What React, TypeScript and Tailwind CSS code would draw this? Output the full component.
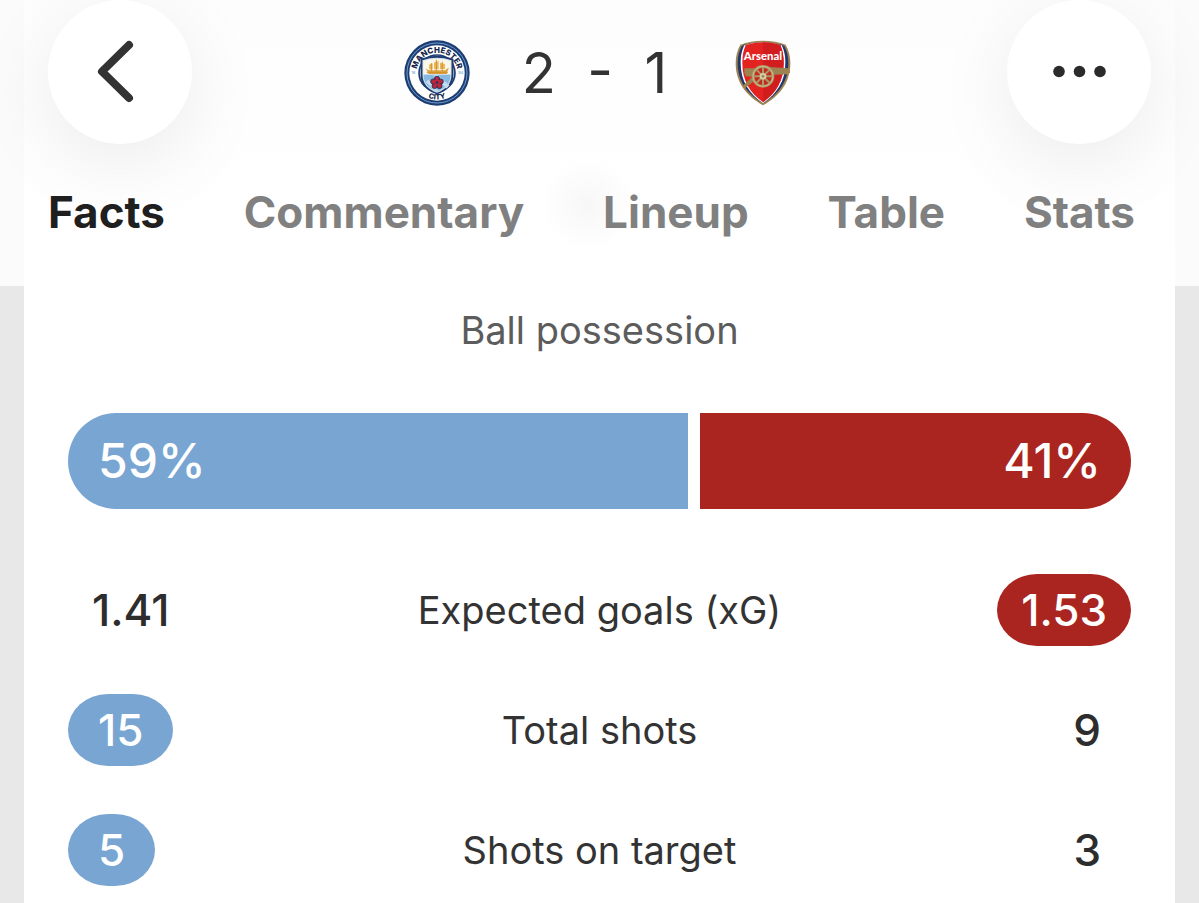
type StatRow = {
  label: string;
  home: string;
  away: string;
  leader: "home" | "away";
};

const tabs = ["Facts", "Commentary", "Lineup", "Table", "Stats"];

const possession = { home: 59, away: 41 };

const stats: StatRow[] = [
  { label: "Expected goals (xG)", home: "1.41", away: "1.53", leader: "away" },
  { label: "Total shots", home: "15", away: "9", leader: "home" },
  { label: "Shots on target", home: "5", away: "3", leader: "home" },
];

const ManCityCrest = () => (
  <svg viewBox="0 0 200 200" className="size-[66px]" role="img" aria-label="Manchester City">
    <defs>
      <path id="city-top" d="M38 100a62 62 0 0 1 124 0" />
      <path id="city-bottom" d="M20 100a80 80 0 0 0 160 0" />
    </defs>
    <circle cx="100" cy="100" r="99" fill="#1d3c72" />
    <circle cx="100" cy="100" r="91" fill="none" stroke="#6f9fce" strokeWidth="3" />
    <circle cx="100" cy="100" r="84" fill="#fff" />
    <circle cx="100" cy="100" r="57" fill="#1d3c72" />
    <circle cx="100" cy="100" r="52" fill="#fff" />
    <path d="M50 57q50-18 100 0v47c0 34-21 51-50 61-29-10-50-27-50-61z" fill="#1d3c72" />
    <path d="M56 61q44-15 88 0v43c0 30-17 46-44 56-27-10-44-26-44-56z" fill="#d9e4ec" />
    <path d="M59 64q41-13 82 0v40H59z" fill="#fbf7ea" />
    <path d="M59 105h82c-1 28-16 41-41 51-25-10-40-23-41-51z" fill="#86b9e2" />
    <path d="M88 108l12-3 38 32-9 10zM66 128l8-8 30 33-8 2z" fill="#c3dcf0" />
    <path d="M66 86l9 6h50l11-9-7 20H75z" fill="#dda13d" />
    <path d="M76 89V74l11-3v18zM91 89V68l14-4v25zM109 88V69l15 4v15z" fill="#e9b85c" />
    <path d="M98 60v38M83 70v25M116 66v28M69 99h64" stroke="#d1922d" strokeWidth="3" fill="none" />
    <g fill="#bd243b" stroke="#28365c" strokeWidth="3">
      <circle cx="100" cy="118" r="8" />
      <circle cx="111" cy="126" r="8" />
      <circle cx="107" cy="139" r="8" />
      <circle cx="93" cy="139" r="8" />
      <circle cx="89" cy="126" r="8" />
    </g>
    <circle cx="100" cy="129" r="9" fill="#bd243b" />
    <circle cx="100" cy="129" r="4" fill="#28365c" />
    <g fill="#14264b" fontFamily="Inter, sans-serif" fontWeight="800" textAnchor="middle">
      <text fontSize="24">
        <textPath href="#city-top" startOffset="50%">MANCHESTER</textPath>
      </text>
      <text fontSize="22">
        <textPath href="#city-bottom" startOffset="50%">CITY</textPath>
      </text>
    </g>
    <g fill="#8ab4da" fontFamily="Inter, sans-serif" fontWeight="600" fontSize="12" textAnchor="middle">
      <text x="28" y="104">18</text>
      <text x="172" y="104">94</text>
    </g>
  </svg>
);

const ArsenalCrest = () => (
  <svg viewBox="0 0 168 196" className="h-[66px] w-[56px]" role="img" aria-label="Arsenal">
    <path d="M84 1q37 0 68 12c9 18 14 33 14 55 0 62-36 101-82 127C38 169 2 130 2 68c0-22 5-37 14-55Q47 1 84 1z" fill="#9c8350" />
    <path d="M84 6q34 0 64 11c8 17 12 31 12 51 0 59-33 95-76 121C41 163 8 127 8 68c0-20 4-34 12-51Q50 6 84 6z" fill="#23356f" />
    <path d="M84 6q30 0 56 9c8 17 11 31 11 53 0 55-25 91-67 121-42-30-67-66-67-121 0-22 3-36 11-53Q54 6 84 6z" fill="#fff" />
    <path d="M84 6q28 0 52 8c7 17 10 32 10 54 0 54-23 89-62 118-39-29-62-64-62-118 0-22 3-37 10-54Q56 6 84 6z" fill="#e2231f" />
    <path d="M84 6q28 0 52 8c7 17 10 32 10 54 0 54-23 89-62 118z" fill="#d21d1f" />
    <text x="84" y="59" fill="#fff" fontFamily="Lato, sans-serif" fontWeight="900" fontSize="34" textAnchor="middle">
      Arsenal
    </text>
    <path d="M28 84h48l12-5 72 5v5h5v9h-6v4l-59 2-28 5-42 35-8-6 30-29-21-1v-8h-3z" fill="#9c8350" />
    <circle cx="84" cy="108" r="31" fill="#c22a22" />
    <g fill="none" stroke="#ad9763">
      <circle cx="84" cy="108" r="30" strokeWidth="8" />
      <circle cx="84" cy="108" r="30" strokeWidth="2" stroke="#d8cda6" />
      <path d="M84 80v56M56 108h56M64 88l40 40M104 88l-40 40" strokeWidth="6" />
    </g>
    <circle cx="84" cy="108" r="10" fill="#d8cda6" />
    <circle cx="84" cy="108" r="4" fill="#9c8350" />
  </svg>
);

const roundButton =
  "size-36 cursor-pointer rounded-full bg-white shadow-[0_20px_80px_rgba(0,0,0,0.08)]";

const BackButton = () => (
  <button type="button" aria-label="Back" className={roundButton}>
    <svg viewBox="0 0 144 144" fill="none" stroke="#333" strokeWidth="8" strokeLinecap="round" strokeLinejoin="round">
      <path d="M81 45L54 71.5L81 98" />
    </svg>
  </button>
);

const MoreButton = () => (
  <button type="button" aria-label="More options" className={roundButton}>
    <svg viewBox="0 0 144 144" fill="#2b2b2b">
      <circle cx="52" cy="71.5" r="5.8" />
      <circle cx="72.5" cy="71.5" r="5.8" />
      <circle cx="93" cy="71.5" r="5.8" />
    </svg>
  </button>
);

const StatValue = ({ value, highlight }: { value: string; highlight?: string }) => (
  <span
    className={`inline-flex h-[72px] items-center rounded-[40px/36px] text-[44px] font-medium ${
      value.includes(".") ? "px-6" : "px-[30px]"
    } ${highlight ? `${highlight} text-white` : "text-[#2d2d2d]"}`}
  >
    {value}
  </span>
);

const App = () => {
  return (
    <div className="flex min-h-screen flex-col bg-[#e8e8e8] font-['Inter',sans-serif]">
      <header className="bg-[#fbfbfb]">
        <div className="mx-6 h-[286px] bg-[radial-gradient(circle_at_49%_205px,#f7f7f7,transparent_45px),linear-gradient(#fdfdfd,#fefefe_30%,#fff)] px-6">
          <div className="grid grid-cols-[1fr_auto_1fr] items-center">
            <BackButton />
            <div className="flex items-center pt-0.5 pr-1">
              <ManCityCrest />
              <h1 className="pr-17 pl-13 text-[56px] whitespace-pre text-[#333]">2  -  1</h1>
              <ArsenalCrest />
            </div>
            <div className="flex justify-end">
              <MoreButton />
            </div>
          </div>
          <nav className="mt-9 flex justify-between pr-4">
            {tabs.map((tab, index) => (
              <a
                key={tab}
                href={`#${tab.toLowerCase()}`}
                className={`text-[44px] leading-16 font-bold ${
                  index === 0 ? "text-[#1f1f1f]" : "text-[#808080]"
                }`}
              >
                {tab}
              </a>
            ))}
          </nav>
        </div>
      </header>

      <main className="mx-6 flex-1 bg-white px-11">
        <h2 className="pt-4 text-center text-[38px] leading-14 text-[#5c5c5c]">Ball possession</h2>
        <div
          className="mt-[55px] grid h-24 gap-3 text-[48px] font-medium text-white"
          style={{ gridTemplateColumns: `${possession.home}fr ${possession.away}fr` }}
        >
          <div className="flex items-center rounded-l-[48px] bg-[#78a5d1] pl-[30px]">
            {possession.home}%
          </div>
          <div className="flex items-center justify-end rounded-r-[48px] bg-[#aa251f] pr-[30px]">
            {possession.away}%
          </div>
        </div>

        <table className="mt-[17px] w-full table-fixed">
          <tbody>
            {stats.map((stat) => (
              <tr key={stat.label}>
                <td className="w-1/4 pt-12">
                  <div className="flex">
                    <StatValue
                      value={stat.home}
                      highlight={stat.leader === "home" ? "bg-[#78a5d1]" : undefined}
                    />
                  </div>
                </td>
                <th scope="row" className="pt-12 text-center text-[38px] font-normal text-[#333]">
                  {stat.label}
                </th>
                <td className="w-1/4 pt-12">
                  <div className="flex justify-end">
                    <StatValue
                      value={stat.away}
                      highlight={stat.leader === "away" ? "bg-[#aa251f]" : undefined}
                    />
                  </div>
                </td>
              </tr>
            ))}
          </tbody>
        </table>
      </main>
    </div>
  );
};

export default App;
